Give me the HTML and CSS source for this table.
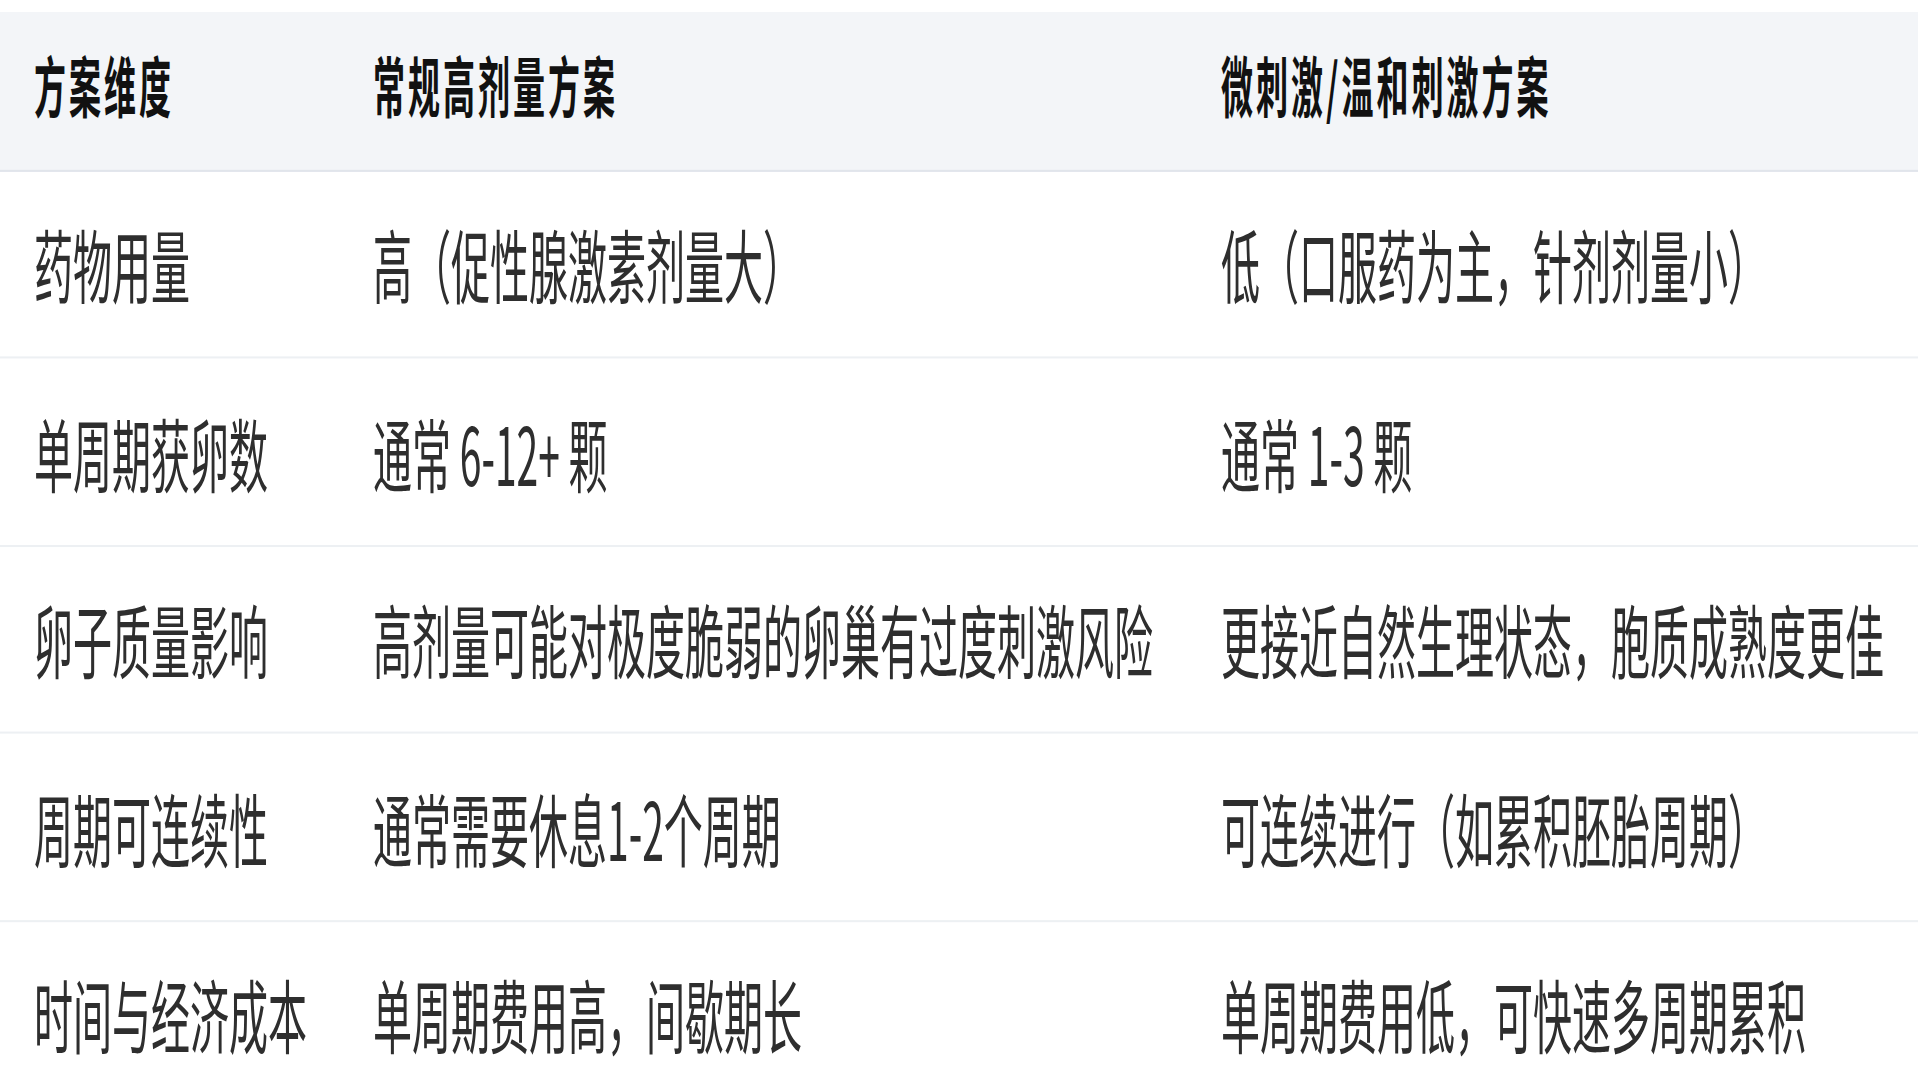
FILE: index.html
```html
<!DOCTYPE html>
<html lang="zh-CN">
<head>
<meta charset="utf-8">
<title>方案对比</title>
<link rel="stylesheet" href="styles.css">
</head>
<body>
<div class="table">
  <div class="row head">
    <div class="cell">方案维度</div>
    <div class="cell">常规高剂量方案</div>
    <div class="cell">微刺激/温和刺激方案</div>
  </div>
  <div class="row">
    <div class="cell">药物用量</div>
    <div class="cell">高（促性腺激素剂量大）</div>
    <div class="cell">低（口服药为主，针剂剂量小）</div>
  </div>
  <div class="row">
    <div class="cell">单周期获卵数</div>
    <div class="cell">通常 6-12+ 颗</div>
    <div class="cell">通常 1-3 颗</div>
  </div>
  <div class="row">
    <div class="cell">卵子质量影响</div>
    <div class="cell">高剂量可能对极度脆弱的卵巢有过度刺激风险</div>
    <div class="cell">更接近自然生理状态，胞质成熟度更佳</div>
  </div>
  <div class="row">
    <div class="cell">周期可连续性</div>
    <div class="cell">通常需要休息1-2个周期</div>
    <div class="cell">可连续进行（如累积胚胎周期）</div>
  </div>
  <div class="row">
    <div class="cell">时间与经济成本</div>
    <div class="cell">单周期费用高，间歇期长</div>
    <div class="cell">单周期费用低，可快速多周期累积</div>
  </div>
</div>
</body>
</html>
```

FILE: styles.css
```css
html, body {
  margin: 0;
  padding: 0;
  background: #ffffff;
}
body {
  width: 1920px;
  height: 1080px;
  overflow: hidden;
  font-family: "Noto Sans CJK SC", "Noto Sans", sans-serif;
}
.table {
  width: 1918px;
  margin-top: 12px;
  transform: scaleY(2.05);
  transform-origin: 0 0;
}
.row {
  display: grid;
  grid-template-columns: 339px 848px 1fr;
  align-items: center;
  height: 90.5px;
  border-bottom: 1px solid #edf0f3;
  font-size: 39px;
  line-height: 1.3;
  color: #2e2e2e;
}
.row.head {
  height: 76.5px;
  background: #f3f5f8;
  border-bottom: 1.5px solid #e1e5eb;
  font-size: 32px;
  letter-spacing: 3px;
  font-weight: 700;
  color: #111111;
}
.cell {
  padding-left: 34px;
  white-space: nowrap;
}
.head .cell {
  padding-bottom: 4px;
}
```
